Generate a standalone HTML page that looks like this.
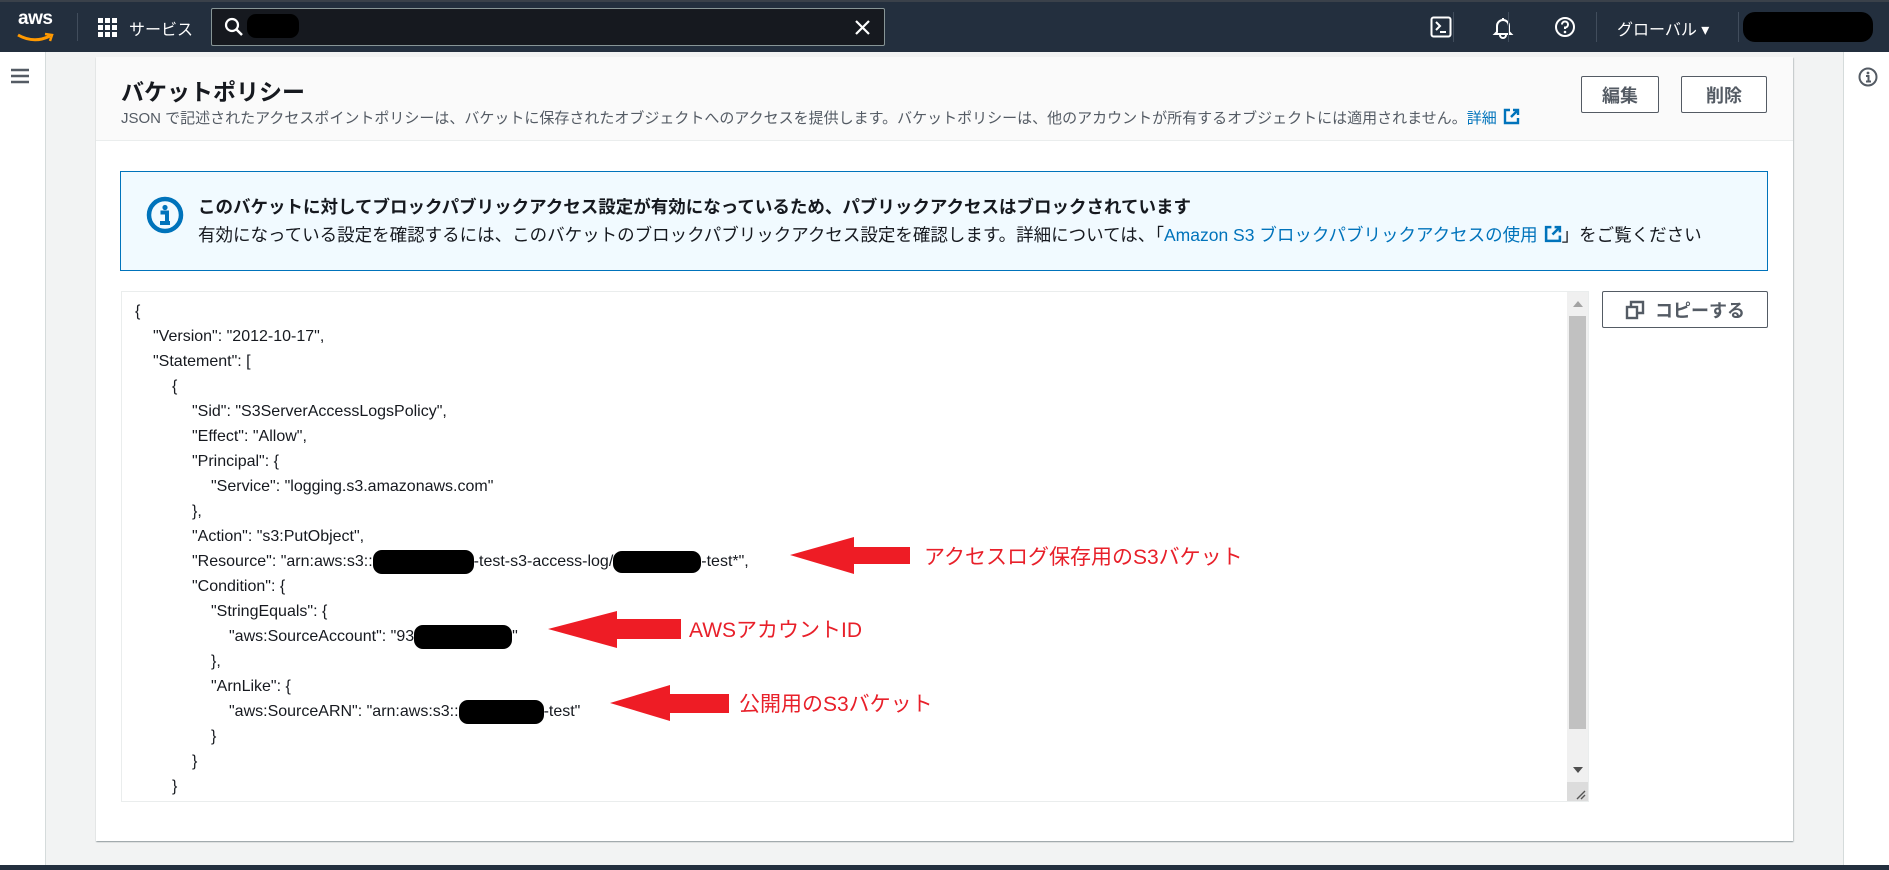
<!DOCTYPE html>
<html><head><meta charset="utf-8">
<style>
*{margin:0;padding:0;box-sizing:border-box}
body{width:1889px;height:870px;position:relative;overflow:hidden;background:#f2f3f3;font-family:"Liberation Sans","Noto Sans CJK JP",sans-serif;color:#16191f}
.a{position:absolute}
.nav{left:0;top:0;width:1889px;height:52px;background:#232f3e;border-top:2px solid #3a414a}
.w{color:#fff}
.btn{position:absolute;border:1px solid #545b64;border-radius:2px;background:#fff;color:#545b64;font-weight:bold;font-size:18px;display:flex;align-items:center;justify-content:center}
.code div{position:absolute;font-size:16px;color:#16191f;white-space:pre;height:25px;line-height:25px}
.red{color:#e8202a;font-size:21px}
.blob{position:absolute;background:#000;border-radius:9px}
.ib{display:inline-block;background:#000;border-radius:9px;height:24px;vertical-align:middle}
.link{color:#0073bb}
.ext{display:inline-block;vertical-align:-2px;margin-left:6px}
</style></head><body>
<div class="a nav">
  <div class="a w" style="left:18px;top:6px;font-size:19px;font-weight:bold;letter-spacing:-0.5px">aws</div>
  <svg class="a" style="left:16px;top:30px" width="40" height="12" viewBox="0 0 40 12"><path d="M2 3 Q18 12 34 4" stroke="#ff9900" stroke-width="3" fill="none"/><path d="M29 2 L36 3 L34 9" stroke="#ff9900" stroke-width="2.5" fill="none"/></svg>
  <div class="a" style="left:77px;top:11px;width:1px;height:28px;background:#414d5c"></div>
  <svg class="a" style="left:98px;top:16px" width="20" height="20" viewBox="0 0 20 20" fill="#fff"><rect x="0" y="0" width="5" height="5"/><rect x="7" y="0" width="5" height="5"/><rect x="14" y="0" width="5" height="5"/><rect x="0" y="7" width="5" height="5"/><rect x="7" y="7" width="5" height="5"/><rect x="14" y="7" width="5" height="5"/><rect x="0" y="14" width="5" height="5"/><rect x="7" y="14" width="5" height="5"/><rect x="14" y="14" width="5" height="5"/></svg>
  <div class="a w" style="left:129px;top:14px;font-size:16px">サービス</div>
  <div class="a" style="left:211px;top:6px;width:674px;height:38px;background:#16191f;border:1px solid #879596;border-radius:2px"></div>
  <svg class="a" style="left:224px;top:15px" width="20" height="20" viewBox="0 0 20 20"><circle cx="8" cy="8" r="6" stroke="#fff" stroke-width="2.2" fill="none"/><path d="M12.5 12.5 L18 18" stroke="#fff" stroke-width="2.5"/></svg>
  <div class="blob" style="left:247px;top:12px;width:52px;height:24px"></div>
  <svg class="a" style="left:854px;top:17px" width="17" height="17" viewBox="0 0 17 17"><path d="M2 2 L15 15 M15 2 L2 15" stroke="#fff" stroke-width="2.2"/></svg>
  <svg class="a" style="left:1430px;top:14px" width="22" height="22" viewBox="0 0 22 22"><rect x="1.5" y="1.5" width="19" height="19" rx="2" stroke="#fff" stroke-width="2" fill="none"/><path d="M6 6 L10 10 L6 14 M10 16 H16" stroke="#fff" stroke-width="2" fill="none"/></svg>
  <div class="a" style="left:1453px;top:10px;width:1px;height:30px;background:#414d5c"></div>
  <svg class="a" style="left:1491px;top:13px" width="24" height="24" viewBox="0 0 24 24"><path d="M6 17 V11 A6 6 0 0 1 18 11 V17 L20 19 H4 Z" stroke="#fff" stroke-width="2" fill="none"/><path d="M12 3 V5 M9 20 A3 3 0 0 0 15 20" stroke="#fff" stroke-width="2" fill="none"/></svg>
  <div class="a" style="left:1508px;top:10px;width:1px;height:30px;background:#414d5c"></div>
  <svg class="a" style="left:1554px;top:14px" width="22" height="22" viewBox="0 0 22 22"><circle cx="11" cy="11" r="9" stroke="#fff" stroke-width="2" fill="none"/><path d="M8 8.5 A3 3 0 1 1 11 11.5 V13" stroke="#fff" stroke-width="2" fill="none"/><circle cx="11" cy="16" r="1.3" fill="#fff"/></svg>
  <div class="a" style="left:1596px;top:10px;width:1px;height:30px;background:#414d5c"></div>
  <div class="a w" style="left:1617px;top:14px;font-size:16px">グローバル ▾</div>
  <div class="a" style="left:1738px;top:10px;width:1px;height:30px;background:#414d5c"></div>
  <div class="blob" style="left:1743px;top:10px;width:130px;height:30px;border-radius:12px"></div>
</div>
<div class="a" style="left:0;top:52px;width:46px;height:815px;background:#fff;border-right:1px solid #d5dbdb"></div>
<svg class="a" style="left:11px;top:68px" width="18" height="16" viewBox="0 0 18 16"><path d="M0 2 H18 M0 8 H18 M0 14 H18" stroke="#545b64" stroke-width="2.4"/></svg>
<div class="a" style="left:1843px;top:52px;width:46px;height:815px;background:#fff;border-left:1px solid #d5dbdb"></div>
<svg class="a" style="left:1858px;top:67px" width="20" height="20" viewBox="0 0 20 20"><circle cx="10" cy="10" r="8.5" stroke="#545b64" stroke-width="2" fill="none"/><circle cx="10" cy="6" r="1.4" fill="#545b64"/><path d="M8 9 H10.5 V14 M8 14.5 H13" stroke="#545b64" stroke-width="2" fill="none"/></svg>
<div class="a" style="left:0;top:865px;width:1889px;height:5px;background:#232f3e"></div>
<div class="a" style="left:96px;top:57px;width:1697px;height:784px;background:#fff;box-shadow:0 1px 1px rgba(0,28,36,.3),1px 1px 1px rgba(0,28,36,.15)"></div>
<div class="a" style="left:96px;top:57px;width:1697px;height:84px;background:#fafafa;border-bottom:1px solid #eaeded"></div>
<div class="a" style="left:121px;top:73px;font-size:23px;font-weight:bold">バケットポリシー</div>
<div class="a" style="left:121px;top:107px;font-size:15px;color:#545b64;white-space:nowrap">JSON で記述されたアクセスポイントポリシーは、バケットに保存されたオブジェクトへのアクセスを提供します。バケットポリシーは、他のアカウントが所有するオブジェクトには適用されません。<span class="link">詳細</span><svg class="ext" width="17" height="17" viewBox="0 0 17 17"><path d="M7 2 H2 V15 H15 V10" stroke="#0073bb" stroke-width="2.4" fill="none"/><path d="M8 9 L15 2 M10 2 H15 V7" stroke="#0073bb" stroke-width="2.4" fill="none"/></svg></div>
<div class="btn" style="left:1581px;top:76px;width:78px;height:37px">編集</div>
<div class="btn" style="left:1681px;top:76px;width:86px;height:37px">削除</div>
<div class="a" style="left:120px;top:171px;width:1648px;height:100px;background:#f1faff;border:1px solid #0073bb"></div>
<svg class="a" style="left:146px;top:196px" width="38" height="38" viewBox="0 0 38 38"><circle cx="19" cy="19" r="16" stroke="#0073bb" stroke-width="4.5" fill="none"/><circle cx="19" cy="11.5" r="2.6" fill="#0073bb"/><path d="M14.5 16.5 H21 V26 M14 27 H24" stroke="#0073bb" stroke-width="4" fill="none"/></svg>
<div class="a" style="left:198px;top:194px;font-size:17.5px;font-weight:bold;white-space:nowrap">このバケットに対してブロックパブリックアクセス設定が有効になっているため、パブリックアクセスはブロックされています</div>
<div class="a" style="left:198px;top:222px;font-size:17.5px;white-space:nowrap">有効になっている設定を確認するには、このバケットのブロックパブリックアクセス設定を確認します。詳細については、「<span class="link">Amazon S3 ブロックパブリックアクセスの使用</span><svg class="ext" width="18" height="18" viewBox="0 0 17 17"><path d="M7 2 H2 V15 H15 V10" stroke="#0073bb" stroke-width="2.4" fill="none"/><path d="M8 9 L15 2 M10 2 H15 V7" stroke="#0073bb" stroke-width="2.4" fill="none"/></svg>」をご覧ください</div>
<div class="a" style="left:121px;top:291px;width:1468px;height:511px;border:1px solid #eaeded;background:#fff;overflow:hidden">
<div class="code">
<div style="left:13px;top:7px">{</div>
<div style="left:31px;top:32px">"Version": "2012-10-17",</div>
<div style="left:31px;top:57px">"Statement": [</div>
<div style="left:50px;top:82px">{</div>
<div style="left:70px;top:107px">"Sid": "S3ServerAccessLogsPolicy",</div>
<div style="left:70px;top:132px">"Effect": "Allow",</div>
<div style="left:70px;top:157px">"Principal": {</div>
<div style="left:89px;top:182px">"Service": "logging.s3.amazonaws.com"</div>
<div style="left:70px;top:207px">},</div>
<div style="left:70px;top:232px">"Action": "s3:PutObject",</div>
<div style="left:70px;top:257px">"Resource": "arn:aws:s3::<span class="ib" style="width:101px"></span>-test-s3-access-log/<span class="ib" style="width:88px;height:22px"></span>-test*",</div>
<div style="left:70px;top:282px">"Condition": {</div>
<div style="left:89px;top:307px">"StringEquals": {</div>
<div style="left:107px;top:332px">"aws:SourceAccount": "93<span class="ib" style="width:98px"></span>"</div>
<div style="left:89px;top:357px">},</div>
<div style="left:89px;top:382px">"ArnLike": {</div>
<div style="left:107px;top:407px">"aws:SourceARN": "arn:aws:s3::<span class="ib" style="width:85px"></span>-test"</div>
<div style="left:89px;top:432px">}</div>
<div style="left:70px;top:457px">}</div>
<div style="left:50px;top:482px">}</div>
</div>
<div class="a" style="left:1445px;top:0;width:22px;height:510px;background:#f0f0f0"></div>
<div class="a" style="left:1447px;top:24px;width:17px;height:413px;background:#c1c1c1"></div>
<svg class="a" style="left:1450px;top:8px" width="12" height="8"><path d="M1 7 L6 1 L11 7Z" fill="#a3a3a3"/></svg>
<svg class="a" style="left:1450px;top:474px" width="12" height="8"><path d="M1 1 L6 7 L11 1Z" fill="#505050"/></svg>
<div class="a" style="left:1445px;top:490px;width:22px;height:20px;background:#dcdcdc"></div>
<svg class="a" style="left:1454px;top:498px" width="10" height="10"><path d="M9 1 L1 9 M9 5 L5 9" stroke="#555" stroke-width="1.4"/></svg>
</div>
<div class="btn" style="left:1602px;top:291px;width:166px;height:37px;font-size:18px"><svg width="20" height="20" viewBox="0 0 20 20" style="margin-right:10px"><rect x="2" y="7" width="10" height="11" stroke="#545b64" stroke-width="2.4" fill="none"/><path d="M6 6 V2 H18 V13 H13" stroke="#545b64" stroke-width="2.4" fill="none"/></svg>コピーする</div>
<svg class="a" style="left:0;top:0" width="1889" height="870">
<polygon fill="#ee1c25" points="790,555 854,537 854,547 910,547 910,564 854,564 854,574"/>
<polygon fill="#ee1c25" points="548,629 617,611 617,619 681,619 681,639 617,639 617,648"/>
<polygon fill="#ee1c25" points="610,703 670,685 670,694 729,694 729,713 670,713 670,721"/>
</svg>
<div class="a red" style="left:924px;top:541px">アクセスログ保存用のS3バケット</div>
<div class="a red" style="left:689px;top:614px">AWSアカウントID</div>
<div class="a red" style="left:739px;top:688px">公開用のS3バケット</div>
</body></html>
